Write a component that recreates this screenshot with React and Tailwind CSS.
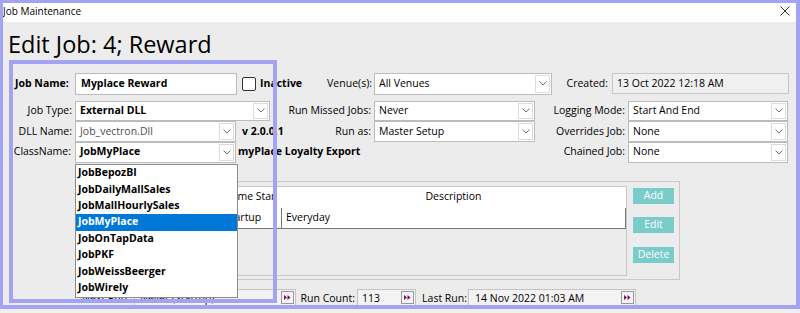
import React from "react";

const Chevron = () => (
  <svg width="8" height="5" viewBox="0 0 8 5">
    <path d="M0.5 0.5 L4 4 L7.5 0.5" fill="none" stroke="#707070" strokeWidth="1" />
  </svg>
);

// combo box look-alike
const Combo = ({ className, text, bold, muted }) => (
  <div className={`flex h-full items-stretch border border-[#bcbcbc] bg-white ${className}`}>
    <div
      className={`flex flex-1 items-center overflow-hidden whitespace-nowrap pl-[4px] ${
        bold ? "font-bold" : ""
      } ${muted ? "text-[#4f4f4f]" : ""}`}
    >
      {text}
    </div>
    <div className="my-[1px] mr-[1px] flex w-[15px] items-center justify-center border border-[#dcdcdc]">
      <Chevron />
    </div>
  </div>
);

const FfButton = () => (
  <div className="mr-[1px] mt-[1px] flex h-[13px] w-[13px] items-center justify-center border border-[#9a9a9a] bg-[#f4f4f4]">
    <svg width="7" height="5" viewBox="0 0 7 5">
      <path d="M0 0 L3 2.5 L0 5 Z M3.5 0 L6.5 2.5 L3.5 5 Z" fill="#7a1462" />
    </svg>
  </div>
);

const classNames = [
  "JobBepozBI",
  "JobDailyMallSales",
  "JobMallHourlySales",
  "JobMyPlace",
  "JobOnTapData",
  "JobPKF",
  "JobWeissBeerger",
  "JobWirely",
];

export default function App() {
  return (
    <div className="relative h-[313px] w-[800px] overflow-hidden bg-[#f0f0f0] font-['Open_Sans',sans-serif] text-[10.5px] text-black">
      <div className="relative flex h-[309px] w-[800px] flex-col overflow-hidden bg-[#ececec]">
        {/* title bar */}
        <div className="flex h-[22px] shrink-0 items-center justify-between bg-white pl-[3px] pr-[10px]">
          <span className="text-[10px]">Job Maintenance</span>
          <svg width="10" height="10" viewBox="0 0 10 10">
            <path d="M0.5 0.5 L9.5 9.5 M9.5 0.5 L0.5 9.5" stroke="#333" strokeWidth="1" />
          </svg>
        </div>

        <h1 className="mt-[8px] h-[28px] pl-[8px] text-[23.5px] leading-[28px] font-normal">
          Edit Job: 4; Reward
        </h1>

        {/* row 1 */}
        <div className="mt-[15px] flex h-[22px] items-center">
          <div className="w-[75px] pl-[15px] font-bold">Job Name:</div>
          <div className="flex h-full w-[162px] items-center border border-[#bcbcbc] bg-white pl-[5px] font-bold">
            Myplace Reward
          </div>
          <div className="flex h-full w-[137px] items-center">
            <div className="ml-[5px] h-[14px] w-[14px] rounded-[2px] border border-[#333] bg-white" />
            <span className="ml-[4px] font-bold">Inactive</span>
            <span className="ml-auto pr-[2px]">Venue(s):</span>
          </div>
          <div className="h-full w-[178px]">
            <Combo text="All Venues" className="w-full" />
          </div>
          <div className="w-[60px] pr-[4px] text-right">Created:</div>
          <div className="flex h-[21px] w-[177px] items-center border border-[#c6c6c6] bg-[#f0f0f0] pl-[4px]">
            13 Oct 2022 12:18 AM
          </div>
        </div>

        {/* row 2 */}
        <div className="mt-[6px] flex h-[21px] items-center">
          <div className="w-[75px] pr-[3px] text-right">Job Type:</div>
          <div className="h-full w-[195px]">
            <Combo text="External DLL" bold className="w-full" />
          </div>
          <div className="w-[104px] pr-[3px] text-right">Run Missed Jobs:</div>
          <div className="h-full w-[161px]">
            <Combo text="Never" className="w-full" />
          </div>
          <div className="w-[93px] pr-[3px] text-right">Logging Mode:</div>
          <div className="h-full w-[160px]">
            <Combo text="Start And End" className="w-full" />
          </div>
        </div>

        {/* row 3 */}
        <div className="flex h-[21px] items-center">
          <div className="w-[75px] pr-[3px] text-right">DLL Name:</div>
          <div className="h-full w-[161px]">
            <Combo text="Job_vectron.Dll" muted className="w-full" />
          </div>
          <div className="flex w-[138px] items-center">
            <span className="pl-[6px] font-bold">v 2.0.0.1</span>
            <span className="ml-auto pr-[3px]">Run as:</span>
          </div>
          <div className="h-full w-[161px]">
            <Combo text="Master Setup" className="w-full" />
          </div>
          <div className="w-[93px] pr-[3px] text-right">Overrides Job:</div>
          <div className="h-full w-[160px]">
            <Combo text="None" className="w-full" />
          </div>
        </div>

        {/* row 4 */}
        <div className="flex h-[21px] items-center">
          <div className="w-[75px] pr-[4px] text-right">ClassName:</div>
          <div className="h-full w-[161px]">
            <Combo text="JobMyPlace" bold className="w-full" />
          </div>
          <div className="flex w-[392px] items-center">
            <span className="pl-[2px] font-bold">myPlace Loyalty Export</span>
            <span className="ml-auto pr-[3px]">Chained Job:</span>
          </div>
          <div className="h-full w-[160px]">
            <Combo text="None" className="w-full" />
          </div>
        </div>

        {/* schedules group */}
        <div className="ml-[80px] mt-[18px] flex h-[101px] w-[600px] items-start border border-[#c9c9c9] pl-[2px] pt-[4px]">
          <div className="flex h-[90px] w-[544px] flex-col border border-[#c8c8c8] bg-white">
            <div className="flex h-[21px] shrink-0 items-center">
              <div className="w-[134px]" />
              <div className="w-[55px] overflow-hidden whitespace-nowrap pl-[11px]">Time Start</div>
              <div className="ml-[8px] flex-1 text-center">Description</div>
            </div>
            <div className="flex h-[21px] shrink-0 items-stretch border-b border-[#777]">
              <div className="w-[134px]" />
              <div className="flex w-[63px] items-center pl-[7px]">Startup</div>
              <div className="flex flex-1 items-center border-l border-r border-[#777] pl-[4px]">Everyday</div>
            </div>
            <div className="flex-1 bg-[#ececec]" />
          </div>
          <div className="ml-[6px] flex flex-col pt-[2px] text-white">
            <div className="flex h-[16px] w-[41px] items-center justify-center bg-[#7accca]">Add</div>
            <div className="mt-[13px] flex h-[16px] w-[41px] items-center justify-center bg-[#7accca]">Edit</div>
            <div className="mt-[14px] flex h-[16px] w-[41px] items-center justify-center bg-[#7accca]">Delete</div>
          </div>
        </div>

        {/* bottom row */}
        <div className="mt-[9px] flex h-[20px] items-start">
          <div className="flex h-full w-[134px] items-center justify-end pr-[4px]">Next Run:</div>
          <div className="flex h-[20px] w-[162px] items-start border border-[#c3c3c3] bg-[#f3f3f3]">
            <span className="flex-1 self-center pl-[5px]">Never (Startup)</span>
            <FfButton />
          </div>
          <div className="flex h-full w-[61px] items-center justify-end pr-[2px]">Run Count:</div>
          <div className="flex h-[20px] w-[59px] items-start border border-[#c3c3c3] bg-[#f3f3f3]">
            <span className="flex-1 self-center pl-[4px]">113</span>
            <FfButton />
          </div>
          <div className="flex h-full w-[52px] items-center justify-end pr-[1px]">Last Run:</div>
          <div className="flex h-[20px] w-[168px] items-start border border-[#c3c3c3] bg-[#f3f3f3]">
            <span className="flex-1 self-center pl-[6px]">14 Nov 2022 01:03 AM</span>
            <FfButton />
          </div>
        </div>

        {/* open ClassName dropdown */}
        <div className="absolute left-[75px] top-[164px] flex h-[134px] w-[163px] flex-col border border-[#8c8c8c] bg-white font-bold">
          {classNames.map((n) => (
            <div
              key={n}
              className={`flex h-[16.4px] items-center pl-[2px] ${
                n === "JobMyPlace" ? "bg-[#0078d7] text-white" : ""
              }`}
            >
              {n}
            </div>
          ))}
        </div>

        {/* highlight box */}
        <div className="pointer-events-none absolute left-[9px] top-[60px] h-[243px] w-[268px] border-[4px] border-[#a3a3f6]" />
      </div>
      {/* outer frame */}
      <div className="pointer-events-none absolute left-0 top-0 h-[309px] w-[800px] border-b-[4px] border-l-[3px] border-r-[4px] border-t-[3px] border-[#a3a3f6]" />
    </div>
  );
}
